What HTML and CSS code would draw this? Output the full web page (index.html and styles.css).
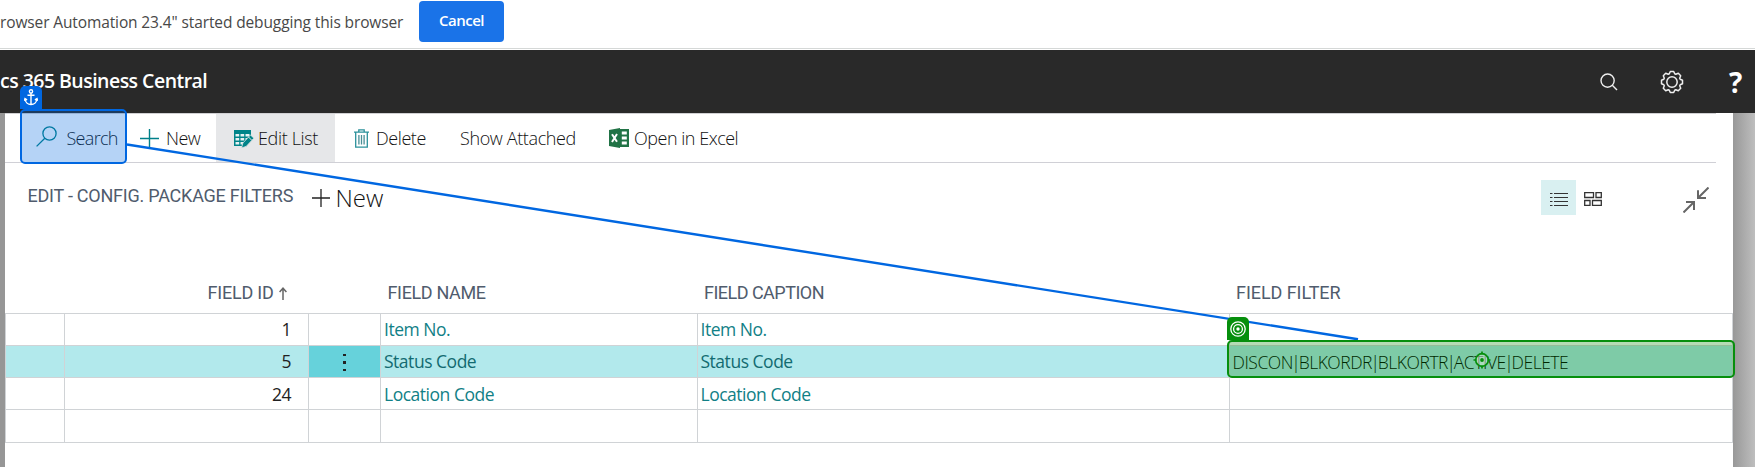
FILE: index.html
```html
<!DOCTYPE html>
<html lang="en">
<head>
<meta charset="utf-8">
<title>Business Central</title>
<link rel="stylesheet" href="styles.css">
</head>
<body>
<div class="infobar">
  <span class="infobar-text">rowser Automation 23.4" started debugging this browser</span>
  <button class="cancel">Cancel</button>
</div>
<header class="topbar">
  <span class="brand">cs 365 Business Central</span>
  <nav class="top-icons">
    <svg width="18" height="18" viewBox="0 0 18 18" fill="none" stroke="#eee" stroke-width="1.4"><circle cx="7.6" cy="7.6" r="6.6"/><path d="M12.3 12.3 17 17"/></svg>
    <svg class="gear" width="24" height="24" viewBox="-12 -12 24 24" fill="none" stroke="#eee" stroke-width="1.5" stroke-linejoin="round"><circle r="5.2"/><path d="M-1.7-10.5H1.7L2.7-8.2 3.8-7.7 6.3-8.7 8.7-6.3 7.7-3.8 8.2-2.7 10.5-1.7V1.7L8.2 2.7 7.7 3.8 8.7 6.3 6.3 8.7 3.8 7.7 2.7 8.2 1.7 10.5H-1.7L-2.7 8.2-3.8 7.7-6.3 8.7-8.7 6.3-7.7 3.8-8.2 2.7-10.5 1.7V-1.7L-8.2-2.7-7.7-3.8-8.7-6.3-6.3-8.7-3.8-7.7-2.7-8.2Z"/></svg>
    <span class="help">?</span>
  </nav>
</header>
<div class="stage">
  <main class="panel">
    <div class="toolbar">
      <div class="tool tool-search">
        <svg width="21" height="21" viewBox="0 0 21 21" fill="none" stroke="#00808a" stroke-width="1.3"><circle cx="13.5" cy="7.5" r="6.6"/><path d="M8.8 12.2.6 20.4"/></svg>
        <span class="t-search">Search</span>
      </div>
      <div class="tool tool-new">
        <svg width="19" height="19" viewBox="0 0 19 19" stroke="#00808a" stroke-width="1.4"><path d="M0 9.5h19M9.5 0v19"/></svg>
        <span class="t-new">New</span>
      </div>
      <div class="tool tool-edit">
        <svg width="20" height="18" viewBox="0 0 20 18"><path d="M0 0h17v6l-6 7-1 3H0Z" fill="#008489"/><path d="M1.5 4h3.7v2.6H1.5zM6.5 4h3.7v2.6H6.5zM11.5 4h4v2.6h-4zM1.5 8h3.7v2.5H1.5zM6.5 8h3.7v2.5H6.5zM11.5 8h2v2h-2zM1.5 12h3.7v2.5H1.5zM6.5 12h3v2.5h-3z" fill="#e8f2f3"/><path d="m7.5 18 1.4-5 7.6-8 3.4 3.2-7.7 8.2Z" fill="#008489" stroke="#e6e7e9" stroke-width=".8"/><path d="m14.5 7 3 3" stroke="#e6e7e9"/></svg>
        <span class="t-edit">Edit List</span>
      </div>
      <div class="tool tool-delete">
        <svg width="15" height="19" viewBox="0 0 15 19" fill="none" stroke="#2b919b" stroke-width="1.3"><path d="M0 3.2h15M4.8 3V.8h5.4V3M1.7 3.5v14.7h11.6V3.5"/><path d="M4.9 6v9.5M7.5 6v9.5M10.1 6v9.5" stroke="#4a8f96"/></svg>
        <span class="t-delete">Delete</span>
      </div>
      <div class="tool tool-attached"><span class="t-attached">Show Attached</span></div>
      <div class="tool tool-excel">
        <svg width="20" height="20" viewBox="0 0 20 20"><path d="M10 1h10v18H10z" fill="#217346"/><path d="M12.8 3.4h5v3h-5zM12.8 8.5h5v3h-5zM12.8 13.6h5v3h-5z" fill="#fff"/><path d="M0 2 11 0v20L0 18Z" fill="#217346"/><path d="m3 6.2 5 7.6M8 6 3 14" stroke="#fff" stroke-width="2"/></svg>
        <span class="t-excel">Open in Excel</span>
      </div>
    </div>
    <div class="heading">
      <h1>EDIT - CONFIG. PACKAGE FILTERS</h1>
      <div class="big-new">
        <svg width="18" height="18" viewBox="0 0 18 18" stroke="#222" stroke-width="1.3"><path d="M0 9h18M9 0v18"/></svg>
        <span>New</span>
      </div>
      <div class="views">
        <span class="view-list"><svg width="18" height="14" viewBox="0 0 18 14" stroke="#333"><path d="M0 .5h2.5M4 .5h14M0 4.5h2.5M4 4.5h14M0 8.5h2.5M4 8.5h14M0 12.5h2.5M4 12.5h14"/></svg></span>
        <svg class="tiles" width="18" height="14" viewBox="0 0 18 14" fill="none" stroke="#333" stroke-width="1.3"><path d="M.7.7h8.8v4.8H.7zM12 .7h5.3v4.8H12zM.7 8.5H6v4.8H.7zM8.5 8.5h8.8v4.8H8.5z"/></svg>
        <svg width="26" height="26" viewBox="0 0 26 26" fill="none" stroke="#666" stroke-width="2"><path d="M25.5.5 15 11M15 3.2V11h8M.5 25.5 11 15M3 15h8v8"/></svg>
      </div>
    </div>
    <div class="grid-head">
      <span class="h-id">FIELD ID<svg width="8" height="13" viewBox="0 0 8 13" fill="none" stroke="#666" stroke-width="1.5"><path d="M4 13V1M.6 5 4 1.2 7.4 5"/></svg></span>
      <span class="h-name">FIELD NAME</span>
      <span class="h-caption">FIELD CAPTION</span>
      <span class="h-filter">FIELD FILTER</span>
    </div>
    <div class="grid">
      <div class="row"><span></span><span class="num">1</span><span></span><span class="link">Item No.</span><span class="link">Item No.</span><span></span></div>
      <div class="row selected"><span></span><span class="num">5</span><span class="more"><i></i><i></i><i></i></span><span class="link">Status Code</span><span class="link">Status Code</span><span class="filter">DISCON<b>|</b>BLKORDR<b>|</b>BLKORTR<b>|</b>ACTIVE<b>|</b>DELETE</span></div>
      <div class="row third"><span></span><span class="num">24</span><span></span><span class="link">Location Code</span><span class="link">Location Code</span><span></span></div>
      <div class="row last"><span></span><span></span><span></span><span></span><span></span><span></span></div>
    </div>
  </main>
</div>

<svg class="connector" width="1755" height="467" viewBox="0 0 1755 467"><path d="M127 144.5 1358 339.2" stroke="#0067e1" stroke-width="2.4"/></svg>
<div class="marker anchor-box"></div>
<div class="badge anchor-badge"><svg width="14" height="17" viewBox="0 0 14 17" fill="none" stroke="#fff" stroke-width="1.4"><circle cx="7" cy="2.4" r="1.6"/><path d="M7 4v11.6M3.5 6.3h7M1 9.8C1.2 13.5 4 15.5 7 15.5s5.8-2 6-5.7M.4 11.8 1 9.6l2.1 1.2M13.6 11.8 13 9.6l-2.1 1.2"/></svg></div>
<div class="marker target-box"></div>
<div class="badge target-badge"><svg width="16" height="16" viewBox="0 0 16 16" fill="none" stroke="#fff" stroke-width="1.3"><circle cx="8" cy="8" r="7.2"/><circle cx="8" cy="8" r="4.4"/><circle cx="8" cy="8" r="1.7" fill="#fff" stroke="none"/></svg></div>
<svg class="crosshair" width="18" height="18" viewBox="0 0 18 18" fill="none" stroke="#068f0d" stroke-width="1.7"><circle cx="9" cy="9" r="6.3" fill="#d9ecd9" fill-opacity=".5"/><path d="M9 .5v3M9 14.5v3M.5 9h3M14.5 9h3"/><circle cx="9" cy="9" r="1.9" fill="#068f0d" stroke="none"/></svg>
</body>
</html>
```
FILE: styles.css
```css
* { box-sizing: border-box; }
body {
  margin: 0;
  height: 467px;
  overflow: hidden;
  position: relative;
  background: #fff;
  color: #212121;
  font-family: "Open Sans", "Noto Sans", sans-serif;
  white-space: nowrap;
}
svg { display: block; flex: none; }

.infobar {
  height: 50px;
  display: flex;
  align-items: flex-start;
  padding-top: 1px;
  background: linear-gradient(#d5d8d7, #d5d8d7) 0 48px / 100% 1px no-repeat;
}
.infobar-text {
  width: 419px;
  font-size: 15.5px;
  line-height: 42px;
  letter-spacing: -0.12px;
  color: #484848;
}
.cancel {
  width: 85px;
  height: 41px;
  padding: 0 0 3px;
  border: 0;
  border-radius: 4px;
  background: #1a73e8;
  color: #fff;
  font: 600 15px "Open Sans", sans-serif;
  letter-spacing: -0.5px;
}

.topbar {
  height: 63px;
  display: flex;
  align-items: center;
  justify-content: space-between;
  padding-right: 12px;
  background: #292929;
  color: #fff;
}
.brand { font-size: 19.5px; font-weight: 600; letter-spacing: -0.53px; padding-bottom: 3px; }
.top-icons { display: flex; align-items: center; padding-top: 1px; }
.gear { margin: 0 45px 0 42px; }
.help { font-size: 28px; line-height: 40px; font-weight: 700; width: 14px; }

.stage {
  height: 354px;
  padding: 0 22px 0 5px;
  background: linear-gradient(90deg, #969696, #989898 1733px, #bebebe);
}
.panel { height: 354px; background: #fff; }
.toolbar {
  width: 1711px;
  height: 50px;
  display: flex;
  border-top: 1px solid #d0d0d3;
  border-bottom: 1px solid #d0d0d6;
  padding-left: 15px;
  font-size: 18px;
  font-weight: 300;
  color: #111;
}
.tool { display: flex; align-items: center; }
.tool-search { width: 107px; padding-left: 16px; gap: 9.5px; }
.tool-search svg { margin-top: -3px; }
.tool-new { width: 89px; padding-left: 13px; gap: 7px; }
.tool-edit { width: 119px; padding-left: 18px; gap: 4px; background: #e6e7e9; }
.tool-edit svg { margin-top: 2px; }
.tool-delete { width: 123px; padding-left: 19px; gap: 7px; }
.tool-attached { width: 151px; padding-left: 2px; }
.tool-excel { gap: 5px; }
.t-search { letter-spacing: -0.7px; }
.t-new { letter-spacing: -0.6px; }
.t-edit { letter-spacing: -0.35px; }
.t-delete { letter-spacing: -0.42px; }
.t-attached { letter-spacing: -0.38px; }
.t-excel { letter-spacing: -0.48px; }

.heading { height: 109px; display: flex; align-items: flex-start; padding-left: 22.5px; }
h1 {
  margin: 16px 0 0;
  width: 284px;
  font: 400 18px/34px Roboto, sans-serif;
  letter-spacing: -0.23px;
  color: #505c6d;
}
.big-new { display: flex; align-items: center; gap: 6px; margin-top: 18px; font-size: 24px; line-height: 34px; font-weight: 300; color: #111; }
.views { display: flex; align-items: center; margin: 17px 24px 0 auto; height: 35px; }
.view-list { width: 35px; height: 35px; display: flex; align-items: center; justify-content: center; background: #d9f0f1; padding-top: 4px; }
.tiles { margin: 3px 81px 0 8px; }
.views > svg:last-child { margin-top: 4px; }

.grid-head, .row { display: grid; grid-template-columns: 59px 244px 72px 317px 532px 504px; }
.grid-head {
  height: 41px;
  font: 18px/42px Roboto, sans-serif;
  letter-spacing: -0.35px;
  color: #505c6d;
}
.h-id { grid-column: 2; display: flex; justify-content: flex-end; align-items: center; gap: 5px; padding-right: 21.5px; letter-spacing: -0.22px; }
.h-name { grid-column: 4; padding-left: 7.5px; }
.h-caption { grid-column: 5; padding-left: 7px; letter-spacing: -0.52px; }
.h-filter { grid-column: 6; padding-left: 7px; letter-spacing: -0.06px; }
.grid { border-top: 1px solid #d0d3d6; font-size: 17.5px; line-height: 31px; }
.row { height: 32px; grid-template-rows: 31px; border-bottom: 1px solid #d0d3d6; }
.row.third { line-height: 33px; }
.row.last { height: 33px; grid-template-rows: 32px; }
.row > span { border-left: 1px solid #d0d3d6; }
.row:not(.third) > span { overflow: hidden; }
.row > span:last-child { border-right: 1px solid #d0d3d6; }
.row > .num { text-align: right; padding-right: 17px; letter-spacing: -0.5px; }
.link { padding-left: 3px; letter-spacing: -0.48px; color: #118086; }
.row > .link + .link { padding-left: 2.5px; }
.row.selected { background: #b2e9ec; }
.selected .link { color: #126b71; line-height: 31px; }
.more { background: #66d2db; display: flex; flex-direction: column; align-items: center; justify-content: center; gap: 5px; padding-top: 2px; }
.more i { width: 2.5px; height: 2.5px; background: #222; }
.filter { padding-left: 2.5px; font-size: 17.5px; font-weight: 300; line-height: 33px; letter-spacing: -0.47px; color: #000; }
.filter b { font-weight: 300; margin: 0 -1.6px; }

.connector { position: absolute; left: 0; top: 0; }
.marker { position: absolute; border: 2px solid; border-radius: 5px; }
.anchor-box { left: 20px; top: 109px; width: 107px; height: 55px; border-color: #0067e1; background: rgba(0, 103, 225, 0.29); }
.target-box { left: 1227px; top: 340px; width: 508px; height: 38px; border-color: #068f0d; background: rgba(0, 130, 0, 0.29); }
.badge { position: absolute; width: 22px; height: 23px; display: flex; align-items: center; justify-content: center; border-radius: 5px 5px 0 0; }
.anchor-badge { left: 20px; top: 86px; background: #0067e1; }
.target-badge { left: 1227px; top: 317px; background: #068f0d; }
.crosshair { position: absolute; left: 1472.5px; top: 350.5px; }
```
